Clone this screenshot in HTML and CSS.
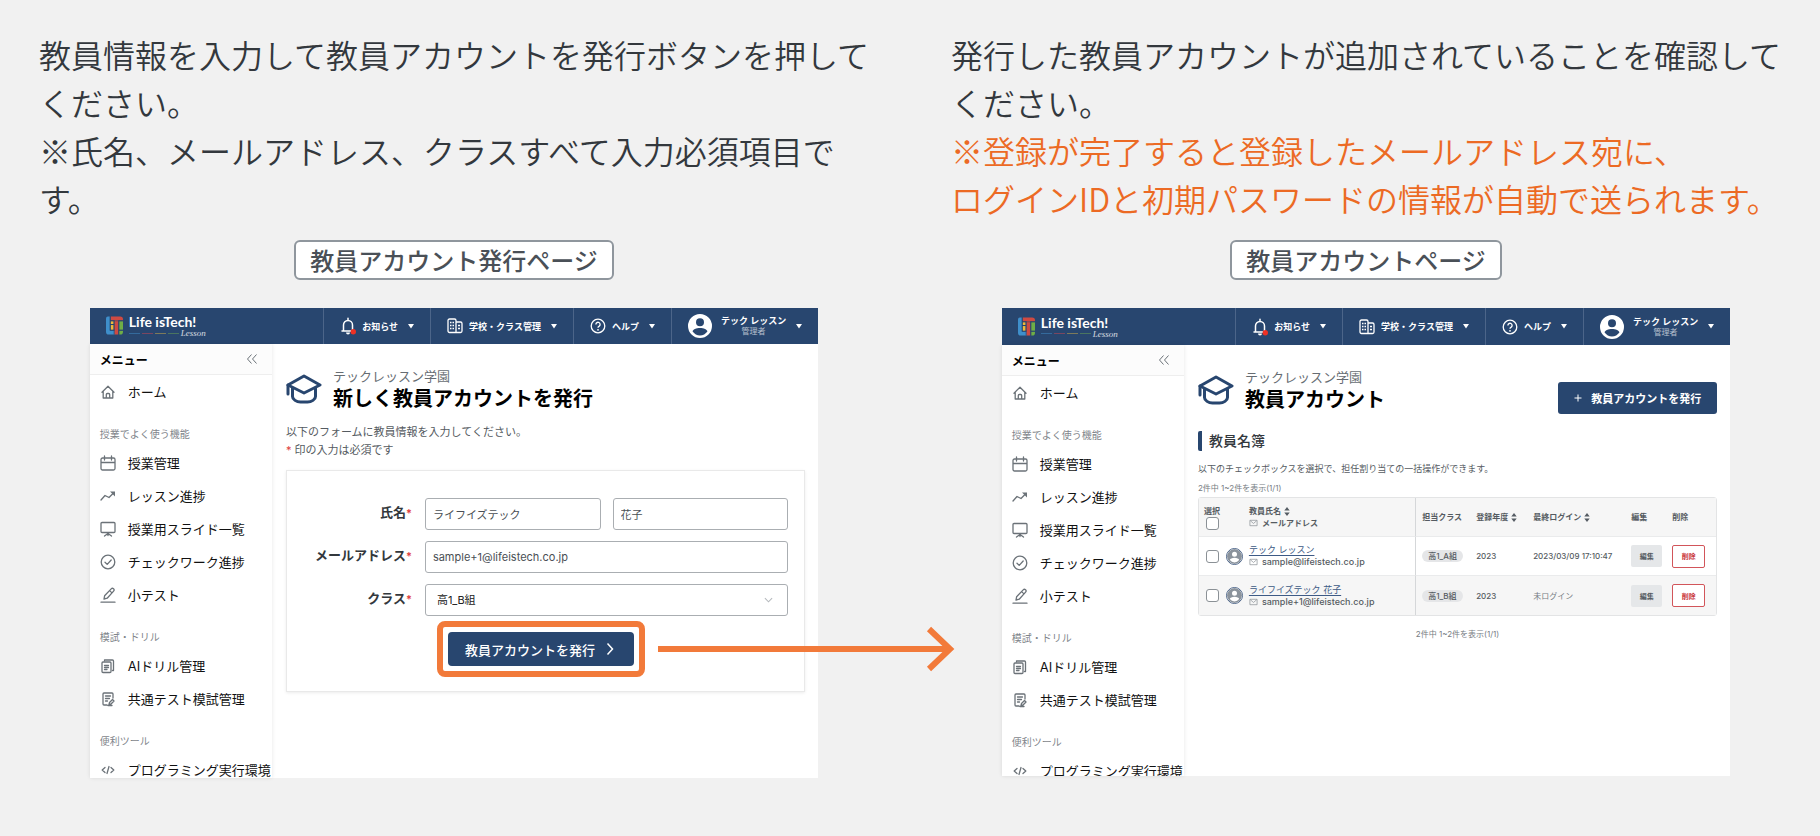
FILE: index.html
```html
<!DOCTYPE html>
<html lang="ja">
<head>
    <meta charset="UTF-8">
    <meta name="viewport" content="width=device-width, initial-scale=1.0">
    <title>教員アカウントの発行</title>
    <link rel="stylesheet" href="styles.css">
</head>
<body>
    <!-- Shared icons -->
    <svg class="sprite" aria-hidden="true">
        <symbol id="logo" viewBox="0 0 18 20">
            <path d="M0 2a2 2 0 0 1 2-2h2v15h5v4H3a3 3 0 0 1-3-3z" fill="#3f8fcb"/>
            <path d="M5 0h10a3 3 0 0 1 3 3v1h-5v15H9V4H5z" fill="#cf4a42"/>
            <path d="M5 5h3v3H5zM5 9h3v5H5z" fill="#f0b93a"/>
            <path d="M14 5h4v9h-4zM14 15h4v1a3 3 0 0 1-3 3h-1z" fill="#6fae46"/>
            <path d="M4.500 0v14.500h4.500M8.500 4v15M13.500 4v15M5 4.500h13M5 8.500h3.500M14 14.500h4" fill="none" stroke="#28466f" stroke-width=".6"/>
        </symbol>
        <symbol id="bell" viewBox="0 0 16 18">
            <path d="M8 1.200v1.600M2 14h12M3.500 14V8a4.500 4.500 0 0 1 9 0v6" fill="none" stroke="#fff" stroke-width="1.500" stroke-linecap="round"/>
            <path d="M6 15.500h4a2 2 0 0 1-4 0z" fill="#fff"/>
            <circle cx="13.300" cy="14.800" r="2.700" fill="#ee3124"/>
        </symbol>
        <symbol id="school" viewBox="0 0 16 16">
            <g fill="none" stroke="#fff" stroke-width="1.300" stroke-linejoin="round">
                <path d="M9 14.500H2.500a1.500 1.500 0 0 1-1.500-1.500V2.500A1.500 1.500 0 0 1 2.500 1h5A1.500 1.500 0 0 1 9 2.500zM9 4h4.500A1.500 1.500 0 0 1 15 5.500V13a1.500 1.500 0 0 1-1.500 1.500H9"/>
                <path d="M3 4.500h1.500M5.500 4.500H7M3 7.500h1.500M5.500 7.500H7M3 10.500h1.500M5.500 10.500H7M11 7.500h2M11 10.500h2"/>
            </g>
        </symbol>
        <symbol id="help" viewBox="0 0 16 16">
            <circle cx="8" cy="8" r="6.800" fill="none" stroke="#fff" stroke-width="1.300"/>
            <path d="M5.900 6.400a2.100 2.100 0 1 1 3.300 1.700C8.400 8.600 8 9 8 9.800" fill="none" stroke="#fff" stroke-width="1.300"/>
            <circle cx="8" cy="11.800" r=".9" fill="#fff"/>
        </symbol>
        <symbol id="person" viewBox="0 0 24 24">
            <path fill-rule="evenodd" fill="currentColor" d="M12 0a12 12 0 1 0 0 24a12 12 0 0 0 0-24zM12 4.200a4 4 0 1 1 0 8a4 4 0 0 1 0-8zM12 14c3.600 0 7.400 1.600 7.400 3.600a9 9 0 0 1-14.800 0c0-2 3.800-3.600 7.400-3.600z"/>
        </symbol>
        <symbol id="caret" viewBox="0 0 6 5"><path d="M0 0h6L3 4.500z" fill="#fff"/></symbol>
        <symbol id="collapse" viewBox="0 0 12 12">
            <path d="M5.500 1.500L1.500 6l4 4.500M10.500 1.500l-4 4.500 4 4.500" fill="none" stroke="#6b7278" stroke-width="1"/>
        </symbol>
        <symbol id="cap" viewBox="0 0 36 32">
            <g fill="none" stroke="#28466f" stroke-width="3" stroke-linejoin="round" stroke-linecap="round">
                <path d="M18 2L34 11 18 19 2 11z"/>
                <path d="M2 11v9M6.500 14v8.500c0 3 4 5.500 8 5.500h7c4 0 8-2.500 8-5.500V14"/>
            </g>
        </symbol>
        <symbol id="home" viewBox="0 0 16 16">
            <path d="M2 8.200L8 2.200l6 6M3.200 7.500V14h9.600V7.500M6.300 14v-3.500a1 1 0 0 1 1-1h1.400a1 1 0 0 1 1 1V14" class="line"/>
        </symbol>
        <symbol id="calendar" viewBox="0 0 16 16">
            <path d="M2.500 3h11A1.500 1.500 0 0 1 15 4.500v9a1.500 1.500 0 0 1-1.500 1.500h-11A1.500 1.500 0 0 1 1 13.500v-9A1.500 1.500 0 0 1 2.500 3zM1 7.500h14M4.500 1v4M11.500 1v4" class="line"/>
        </symbol>
        <symbol id="trend" viewBox="0 0 16 16">
            <path d="M1 12l4-4.500 4 2L13 5.500" class="line"/>
            <path d="M10 3.500h5v5z" fill="#6b7278"/>
        </symbol>
        <symbol id="slides" viewBox="0 0 16 16">
            <path d="M2 1.500h12a1 1 0 0 1 1 1v8a1 1 0 0 1-1 1H2a1 1 0 0 1-1-1v-8a1 1 0 0 1 1-1zM8 11.500v3M4.500 15L8 12.500l3.500 2.500" class="line"/>
        </symbol>
        <symbol id="check" viewBox="0 0 16 16">
            <circle cx="8" cy="8" r="6.800" class="line"/>
            <path d="M5 8.200l2.200 2.200L11.200 6" class="line"/>
        </symbol>
        <symbol id="pencil" viewBox="0 0 16 16">
            <path d="M1 15.200h14M4 12l.6-3.200 6.600-6.900a1.600 1.600 0 0 1 2.400 2.200L7.200 11.200zM9.600 3.600L12 5.900" class="line"/>
        </symbol>
        <symbol id="copy" viewBox="0 0 16 16">
            <path d="M3 4h7a1 1 0 0 1 1 1v8.500a1 1 0 0 1-1 1H3a1 1 0 0 1-1-1V5a1 1 0 0 1 1-1zM4.500 2.500V2h8a1 1 0 0 1 1 1v9.500h-1M4.500 7.500h4M4.500 9.500h4M4.500 11.500h2.500" class="line"/>
        </symbol>
        <symbol id="exam" viewBox="0 0 16 16">
            <path d="M7 14H4a1 1 0 0 1-1-1V3a1 1 0 0 1 1-1h8a1 1 0 0 1 1 1v4M5.500 5h5M5.500 7.500h4M5.500 10h2M9 13.500l.5-2 3-3 1.500 1.500-3 3zM8 14.500h4" class="line"/>
        </symbol>
        <symbol id="code" viewBox="0 0 16 16">
            <path d="M5 5.500L2.200 8 5 10.500M11 5.500L13.800 8 11 10.500M9 4.500l-2 7" class="line"/>
        </symbol>
        <symbol id="mail" viewBox="0 0 10 8">
            <path d="M1 1h8v6H1zM1.500 1.500L5 4.500l3.500-3" fill="none" stroke="#8b9196" stroke-width=".8"/>
        </symbol>
        <symbol id="sort" viewBox="0 0 6 10">
            <path d="M0 4l3-4 3 4zM0 6h6l-3 4z" fill="#555c63"/>
        </symbol>
    </svg>

    <main class="guide">
        <section class="step">
            <p class="step-text">教員情報を入力して教員アカウントを発行ボタンを押してください。<br>※氏名、メールアドレス、クラスすべて入力必須項目です。</p>
            <h2 class="step-label">教員アカウント発行ページ</h2>

            <div class="screen">
                <header class="topbar">
                    <div class="brand">
                        <svg class="brand-icon"><use href="#logo"/></svg>
                        <div class="brand-name">
                            <span>Life isTech!</span>
                            <div class="brand-sub">
                                <i class="dash blue"></i><i class="dash red"></i><i class="dash yellow"></i><i class="dash green"></i>
                                <em>Lesson</em>
                            </div>
                        </div>
                    </div>
                    <button class="top-item"><svg class="top-icon"><use href="#bell"/></svg>お知らせ<svg class="caret"><use href="#caret"/></svg></button>
                    <button class="top-item"><svg class="top-icon"><use href="#school"/></svg>学校・クラス管理<svg class="caret"><use href="#caret"/></svg></button>
                    <button class="top-item"><svg class="top-icon"><use href="#help"/></svg>ヘルプ<svg class="caret"><use href="#caret"/></svg></button>
                    <button class="top-item">
                        <svg class="top-avatar"><use href="#person"/></svg>
                        <span class="user">テック レッスン<small>管理者</small></span>
                        <svg class="caret"><use href="#caret"/></svg>
                    </button>
                </header>
                <div class="screen-body">
                    <nav class="sidebar">
                        <div class="menu-head">メニュー<svg class="collapse"><use href="#collapse"/></svg></div>
                        <a class="nav-item" href="#"><svg><use href="#home"/></svg>ホーム</a>
                        <div class="nav-title">授業でよく使う機能</div>
                        <a class="nav-item" href="#"><svg><use href="#calendar"/></svg>授業管理</a>
                        <a class="nav-item" href="#"><svg><use href="#trend"/></svg>レッスン進捗</a>
                        <a class="nav-item" href="#"><svg><use href="#slides"/></svg>授業用スライド一覧</a>
                        <a class="nav-item" href="#"><svg><use href="#check"/></svg>チェックワーク進捗</a>
                        <a class="nav-item" href="#"><svg><use href="#pencil"/></svg>小テスト</a>
                        <div class="nav-title">模試・ドリル</div>
                        <a class="nav-item" href="#"><svg><use href="#copy"/></svg>AIドリル管理</a>
                        <a class="nav-item" href="#"><svg><use href="#exam"/></svg>共通テスト模試管理</a>
                        <div class="nav-title">便利ツール</div>
                        <a class="nav-item" href="#"><svg><use href="#code"/></svg>プログラミング実行環境</a>
                    </nav>
                    <div class="content">
                        <div class="page-head">
                            <svg class="cap"><use href="#cap"/></svg>
                            <div>
                                <div class="school-name">テックレッスン学園</div>
                                <h1>新しく教員アカウントを発行</h1>
                            </div>
                        </div>
                        <p class="lead">以下のフォームに教員情報を入力してください。<br><span class="required">*</span> 印の入力は必須です</p>

                        <form class="card">
                            <label class="field-label" for="last-name">氏名<span class="required">*</span></label>
                            <div class="field-pair">
                                <input id="last-name" type="text" value="ライフイズテック">
                                <input type="text" aria-label="名" value="花子">
                            </div>
                            <label class="field-label" for="email">メールアドレス<span class="required">*</span></label>
                            <input id="email" type="email" value="sample+1@lifeistech.co.jp">
                            <label class="field-label" for="class">クラス<span class="required">*</span></label>
                            <div class="select-wrap">
                                <select id="class"><option>高1_B組</option></select>
                                <svg class="select-arrow" viewBox="0 0 10 6"><path d="M1 1l4 4 4-4" fill="none" stroke="#b5b9bd" stroke-width="1.200"/></svg>
                            </div>
                            <div class="highlight">
                                <button type="button" class="submit">教員アカウントを発行
                                    <svg viewBox="0 0 8 14"><path d="M1.500 1.500l5 5.500-5 5.500" fill="none" stroke="#fff" stroke-width="1.500"/></svg>
                                </button>
                                <svg class="arrow" viewBox="0 0 297 48"><path d="M0 24h290M271 4l21 20-21 20" fill="none" stroke="#f27a3a" stroke-width="6"/></svg>
                            </div>
                        </form>
                    </div>
                </div>
            </div>
        </section>

        <section class="step">
            <p class="step-text">発行した教員アカウントが追加されていることを確認してください。<br><span class="notice">※登録が完了すると登録したメールアドレス宛に、<br>ログインIDと初期パスワードの情報が自動で送られます。</span></p>
            <h2 class="step-label">教員アカウントページ</h2>

            <div class="screen screen-list">
                <header class="topbar">
                    <div class="brand">
                        <svg class="brand-icon"><use href="#logo"/></svg>
                        <div class="brand-name">
                            <span>Life isTech!</span>
                            <div class="brand-sub">
                                <i class="dash blue"></i><i class="dash red"></i><i class="dash yellow"></i><i class="dash green"></i>
                                <em>Lesson</em>
                            </div>
                        </div>
                    </div>
                    <button class="top-item"><svg class="top-icon"><use href="#bell"/></svg>お知らせ<svg class="caret"><use href="#caret"/></svg></button>
                    <button class="top-item"><svg class="top-icon"><use href="#school"/></svg>学校・クラス管理<svg class="caret"><use href="#caret"/></svg></button>
                    <button class="top-item"><svg class="top-icon"><use href="#help"/></svg>ヘルプ<svg class="caret"><use href="#caret"/></svg></button>
                    <button class="top-item">
                        <svg class="top-avatar"><use href="#person"/></svg>
                        <span class="user">テック レッスン<small>管理者</small></span>
                        <svg class="caret"><use href="#caret"/></svg>
                    </button>
                </header>
                <div class="screen-body">
                    <nav class="sidebar">
                        <div class="menu-head">メニュー<svg class="collapse"><use href="#collapse"/></svg></div>
                        <a class="nav-item" href="#"><svg><use href="#home"/></svg>ホーム</a>
                        <div class="nav-title">授業でよく使う機能</div>
                        <a class="nav-item" href="#"><svg><use href="#calendar"/></svg>授業管理</a>
                        <a class="nav-item" href="#"><svg><use href="#trend"/></svg>レッスン進捗</a>
                        <a class="nav-item" href="#"><svg><use href="#slides"/></svg>授業用スライド一覧</a>
                        <a class="nav-item" href="#"><svg><use href="#check"/></svg>チェックワーク進捗</a>
                        <a class="nav-item" href="#"><svg><use href="#pencil"/></svg>小テスト</a>
                        <div class="nav-title">模試・ドリル</div>
                        <a class="nav-item" href="#"><svg><use href="#copy"/></svg>AIドリル管理</a>
                        <a class="nav-item" href="#"><svg><use href="#exam"/></svg>共通テスト模試管理</a>
                        <div class="nav-title">便利ツール</div>
                        <a class="nav-item" href="#"><svg><use href="#code"/></svg>プログラミング実行環境</a>
                    </nav>
                    <div class="content">
                        <div class="page-head">
                            <svg class="cap"><use href="#cap"/></svg>
                            <div>
                                <div class="school-name">テックレッスン学園</div>
                                <h1>教員アカウント</h1>
                            </div>
                            <button class="add-button"><svg viewBox="0 0 8 8"><path d="M4 .5v7M.5 4h7" stroke="#fff" stroke-width="1"/></svg>教員アカウントを発行</button>
                        </div>
                        <h3 class="list-title">教員名簿</h3>
                        <p class="list-lead">以下のチェックボックスを選択で、担任割り当ての一括操作ができます。</p>
                        <p class="count">2件中 1~2件を表示(1/1)</p>

                        <table class="teachers">
                            <colgroup>
                                <col class="col-check"><col><col class="col-class"><col class="col-year"><col class="col-login"><col class="col-edit"><col class="col-delete">
                            </colgroup>
                            <thead>
                                <tr>
                                    <th class="check-cell"><label for="all">選択</label><input id="all" type="checkbox"></th>
                                    <th class="name-head">
                                        <div>教員氏名<svg class="sort"><use href="#sort"/></svg></div>
                                        <div><svg class="mail"><use href="#mail"/></svg>メールアドレス</div>
                                    </th>
                                    <th>担当クラス</th>
                                    <th>登録年度<svg class="sort"><use href="#sort"/></svg></th>
                                    <th>最終ログイン<svg class="sort"><use href="#sort"/></svg></th>
                                    <th>編集</th>
                                    <th>削除</th>
                                </tr>
                            </thead>
                            <tbody>
                                <tr>
                                    <td class="check-cell"><input type="checkbox" aria-label="テック レッスン"></td>
                                    <td class="name-cell">
                                        <div class="teacher">
                                            <svg class="avatar"><use href="#person"/></svg>
                                            <div>
                                                <a href="#">テック レッスン</a>
                                                <div class="mail-line"><svg class="mail"><use href="#mail"/></svg>sample@lifeistech.co.jp</div>
                                            </div>
                                        </div>
                                    </td>
                                    <td><span class="pill">高1_A組</span></td>
                                    <td>2023</td>
                                    <td>2023/03/09 17:10:47</td>
                                    <td><button class="edit">編集</button></td>
                                    <td><button class="delete">削除</button></td>
                                </tr>
                                <tr>
                                    <td class="check-cell"><input type="checkbox" aria-label="ライフイズテック 花子"></td>
                                    <td class="name-cell">
                                        <div class="teacher">
                                            <svg class="avatar"><use href="#person"/></svg>
                                            <div>
                                                <a href="#">ライフイズテック 花子</a>
                                                <div class="mail-line"><svg class="mail"><use href="#mail"/></svg>sample+1@lifeistech.co.jp</div>
                                            </div>
                                        </div>
                                    </td>
                                    <td><span class="pill">高1_B組</span></td>
                                    <td>2023</td>
                                    <td class="never">未ログイン</td>
                                    <td><button class="edit">編集</button></td>
                                    <td><button class="delete">削除</button></td>
                                </tr>
                            </tbody>
                        </table>
                        <p class="count count-bottom">2件中 1~2件を表示(1/1)</p>
                    </div>
                </div>
            </div>
        </section>
    </main>
</body>
</html>
```

FILE: styles.css
```css
* {
    box-sizing: border-box;
}

body {
    margin: 0;
    background: #f1f1f1;
    color: #33383d;
    font-family: Inter, "Noto Sans CJK JP", sans-serif;
}

h1, h2, h3, p {
    margin: 0;
}

button, input, select {
    font-family: inherit;
}

button {
    padding: 0;
    border: none;
    cursor: pointer;
}

svg {
    display: block;
    flex-shrink: 0;
}

.sprite {
    position: absolute;
    width: 0;
    height: 0;
}

.line {
    fill: none;
    stroke: #6b7278;
    stroke-width: 1.3;
    stroke-linecap: round;
    stroke-linejoin: round;
}

.guide {
    display: grid;
    grid-template-columns: 1fr 1fr;
    column-gap: 4px;
    padding: 30px 0;
}

.step {
    display: flex;
    flex-direction: column;
    align-items: center;
    min-width: 0;
}

.step-text {
    align-self: stretch;
    padding: 0 32px 0 39px;
    font-family: "Noto Sans CJK JP", sans-serif;
    font-size: 32px;
    line-height: 48px;
    font-weight: 350;
}

.notice {
    color: #ec6a24;
}

.step-label {
    margin: 18px 0 28px;
    padding: 0 14px;
    background: #fff;
    border: 2px solid #8f969d;
    border-radius: 6px;
    color: #4a5057;
    font-family: "Noto Sans CJK JP", sans-serif;
    font-size: 24px;
    line-height: 36px;
    font-weight: 500;
}

/* App window */
.screen {
    display: flex;
    flex-direction: column;
    width: calc(80% + 2px);
    aspect-ratio: 728 / 470;
    min-height: 0;
    background: #fff;
}

.screen-list {
    aspect-ratio: 728 / 468;
}

.topbar {
    display: flex;
    height: 36px;
    flex-shrink: 0;
    background: #28466f;
    color: #fff;
}

.screen-list .topbar {
    height: 37px;
}

.brand {
    display: flex;
    align-items: center;
    gap: 6px;
    margin-right: auto;
    padding-left: 16px;
}

.brand-icon {
    width: 17px;
    height: 20px;
}

.brand-name {
    font-family: Lato, sans-serif;
    font-size: 14px;
    line-height: 14px;
    font-weight: 700;
}

.brand-sub {
    display: flex;
    align-items: center;
    gap: 2px;
    height: 8px;
}

.brand-sub em {
    font-family: "Liberation Serif", serif;
    font-size: 9px;
    line-height: 8px;
    font-weight: 400;
    opacity: 0.8;
}

.dash {
    width: 11px;
    height: 1px;
}

.dash.blue { background: #346a9c; }
.dash.red { background: #7a4660; }
.dash.yellow { background: #7d7a5a; }
.dash.green { background: #4a7560; }

.top-item {
    display: flex;
    align-items: center;
    padding: 0 16px;
    background: none;
    border-left: 1px solid #4c6589;
    color: #fff;
    font-size: 9px;
    font-weight: 600;
}

.top-icon {
    width: 16px;
    height: 18px;
    margin-right: 6px;
}

.top-avatar {
    width: 24px;
    height: 24px;
    margin-right: 9px;
}

.caret {
    width: 6px;
    height: 5px;
    margin-left: 10px;
}

.user {
    line-height: 11px;
}

.user small {
    display: block;
    font-size: 8px;
    font-weight: 400;
    opacity: 0.65;
}

.screen-body {
    display: flex;
    flex: 1;
    min-height: 0;
}

.sidebar {
    width: 25%;
    overflow: hidden;
    white-space: nowrap;
    box-shadow: 0 0 4px rgba(0, 0, 0, 0.1);
}

.menu-head {
    display: flex;
    align-items: center;
    justify-content: space-between;
    height: 31px;
    padding: 0 14px 0 10px;
    background: #fcfcfc;
    border-bottom: 1px solid #eee;
    color: #000;
    font-size: 12px;
    font-weight: 700;
}

.collapse {
    width: 12px;
    height: 12px;
}

.nav-item {
    display: flex;
    align-items: center;
    gap: 12px;
    height: 33px;
    padding-left: 10px;
    color: #111;
    font-size: 13px;
    line-height: 18px;
    text-decoration: none;
}

.nav-item svg {
    width: 16px;
    height: 16px;
}

.nav-title {
    padding: 16px 0 2px 10px;
    color: #7f858b;
    font-size: 10px;
    line-height: 20px;
}

.content {
    flex: 1;
    min-width: 0;
    padding: 23px 13px 0 14px;
}

.page-head {
    display: flex;
    align-items: center;
    gap: 11px;
}

.cap {
    width: 36px;
    height: 32px;
}

.school-name {
    color: #666c72;
    font-size: 13px;
    line-height: 18px;
}

h1 {
    color: #000;
    font-size: 20px;
    line-height: 28px;
    font-weight: 700;
}

.required {
    color: #e04040;
}

.lead {
    margin-top: 10px;
    color: #555b61;
    font-size: 11px;
    line-height: 18px;
}

/* Account form */
.card {
    display: grid;
    grid-template-columns: 125px 1fr;
    gap: 11px 13px;
    margin-top: 11px;
    padding: 27px 16px 14px 0;
    border: 1px solid #e9e9e9;
    box-shadow: 0 1px 3px rgba(0, 0, 0, 0.08);
}

.field-label {
    font-size: 13px;
    line-height: 28px;
    font-weight: 600;
    text-align: right;
}

.field-label .required {
    font-size: 11px;
}

.field-pair {
    display: grid;
    grid-template-columns: 1fr 1fr;
    gap: 12px;
}

.card input,
.card select {
    width: 100%;
    height: 32px;
    padding: 0 7px;
    background: #fff;
    border: 1px solid #aaaeb2;
    border-radius: 3px;
    color: #4a4f55;
    font-size: 11px;
}

.card select {
    padding: 0 11px;
    color: #222;
    appearance: none;
}

.select-wrap {
    position: relative;
}

.select-arrow {
    position: absolute;
    top: 13px;
    right: 15px;
    width: 9px;
    height: 6px;
}

.highlight {
    grid-column: 2;
    justify-self: start;
    position: relative;
    margin: -6px 0 0 12px;
    padding: 5px;
    border: 6px solid #f27a3a;
    border-radius: 8px;
}

.submit {
    display: flex;
    align-items: center;
    gap: 11px;
    height: 34px;
    padding: 0 20px 0 17px;
    background: #28466f;
    border-radius: 4px;
    color: #fff;
    font-size: 13px;
    font-weight: 500;
}

.submit svg {
    width: 8px;
    height: 14px;
}

.arrow {
    position: absolute;
    top: -2px;
    left: 100%;
    width: 297px;
    height: 48px;
    margin-left: 19px;
}

/* Teacher list */
.add-button {
    display: flex;
    align-items: center;
    align-self: flex-end;
    gap: 9px;
    height: 32px;
    margin-left: auto;
    padding: 0 16px;
    background: #28466f;
    border-radius: 3px;
    color: #fff;
    font-size: 11px;
    font-weight: 600;
}

.add-button svg {
    width: 8px;
    height: 8px;
}

.list-title {
    margin-top: 17px;
    padding-left: 7px;
    border-left: 4px solid #28466f;
    border-radius: 2px;
    font-size: 14px;
    line-height: 20px;
    font-weight: 500;
}

.list-lead {
    margin-top: 10px;
    color: #555b61;
    font-size: 9px;
    line-height: 16px;
}

.count {
    margin: 3px 0 1px;
    color: #777d83;
    font-size: 8px;
    line-height: 16px;
}

.count-bottom {
    margin-top: 10px;
    text-align: center;
}

.teachers {
    width: 100%;
    table-layout: fixed;
    border: 1px solid #e3e4e5;
    border-radius: 3px;
    border-spacing: 0;
    color: #555b61;
    font-size: 8px;
    line-height: 12px;
    white-space: nowrap;
}

.col-check { width: 27px; }
.col-class { width: 54px; }
.col-year { width: 57px; }
.col-login { width: 98px; }
.col-edit { width: 41px; }
.col-delete { width: 50px; }

.teachers th,
.teachers td {
    height: 39px;
    padding: 0 0 0 6px;
    text-align: left;
    font-weight: 500;
}

.teachers thead th,
.teachers tbody tr:nth-child(even) td {
    background: #f6f6f6;
}

.teachers th,
.teachers tbody tr:first-child td {
    border-bottom: 1px solid #eaebec;
}

.teachers th:nth-child(2),
.teachers td:nth-child(2) {
    border-right: 1px solid #d5d7d9;
}

.teachers th {
    font-weight: 600;
}

.teachers .check-cell {
    padding-left: 5px;
}

.teachers .name-head {
    padding-left: 23px;
}

.teachers .name-cell {
    padding-left: 0;
}

.name-head div {
    display: flex;
    align-items: center;
}

.teachers input {
    display: block;
    appearance: none;
    width: 13px;
    height: 13px;
    margin: 0 0 0 2px;
    background: #fff;
    border: 1px solid #8b9196;
    border-radius: 3px;
}

.sort {
    display: inline-block;
    width: 6px;
    height: 9px;
    margin-left: 3px;
    vertical-align: middle;
}

.mail {
    width: 9px;
    height: 8px;
    margin-right: 4px;
}

.teacher {
    display: flex;
    align-items: center;
    gap: 6px;
}

.teacher a {
    color: #3d5a85;
    font-size: 9px;
    font-weight: 400;
    text-underline-offset: 2px;
}

.avatar {
    width: 17px;
    height: 17px;
    color: #8b939c;
    background: #fff;
    border: 1px solid #4c6589;
    border-radius: 50%;
}

.mail-line {
    display: flex;
    align-items: center;
    font-size: 9px;
}

.pill {
    display: inline-block;
    padding: 0 6px;
    background: #e5e6e8;
    border-radius: 6px;
}

.teachers .never {
    color: #777d83;
    font-weight: 400;
}

.edit,
.delete {
    display: block;
    width: 31px;
    height: 22px;
    background: #e5e7e9;
    border-radius: 2px;
    color: #555b61;
    font-size: 7px;
    font-weight: 700;
}

.delete {
    width: 33px;
    height: 23px;
    background: #fff;
    border: 1px solid #d2555a;
    color: #c9363c;
}
```
